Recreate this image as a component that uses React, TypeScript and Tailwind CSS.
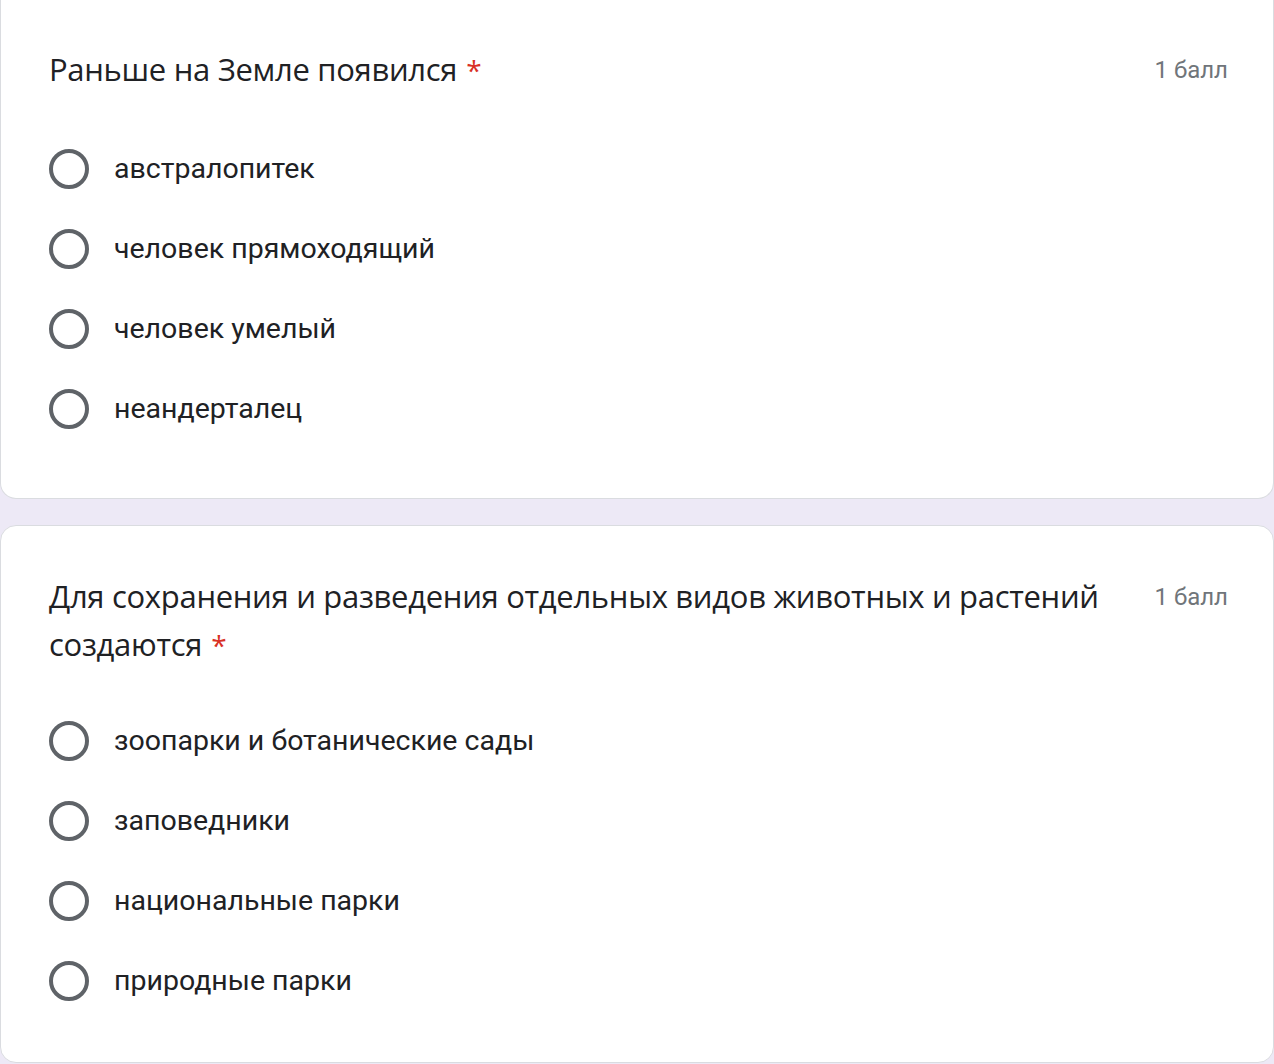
import React from 'react';

interface Question {
    title: string;
    points: string;
    options: string[];
}

const questions: Question[] = [
    {
        title: 'Раньше на Земле появился',
        points: '1 балл',
        options: ['австралопитек', 'человек прямоходящий', 'человек умелый', 'неандерталец'],
    },
    {
        title: 'Для сохранения и разведения отдельных видов животных и растений создаются',
        points: '1 балл',
        options: ['зоопарки и ботанические сады', 'заповедники', 'национальные парки', 'природные парки'],
    },
];

function Radio() {
    return <span className="w-[40px] h-[40px] shrink-0 rounded-full border-[4px] border-[#5f6368]" />;
}

function QuestionBody({ q, gap }: { q: Question; gap: string }) {
    return (
        <>
            <div className="flex items-start justify-between gap-[28px]">
                <div className="text-[31px] leading-[48px] text-[#202124] font-['Open_Sans',sans-serif] tracking-[-0.3px]">
                    {q.title}
                    <span className="text-[#d93025] ml-[9px] text-[28px] leading-none">*</span>
                </div>
                <div className="text-[24px] leading-[48px] text-[#70757a] shrink-0 pt-[1px]">{q.points}</div>
            </div>
            <div className={`flex flex-col ${gap}`}>
                {q.options.map((o) => (
                    <div key={o} className="h-[80px] flex items-center gap-[25px]">
                        <Radio />
                        <span className="text-[28.5px] text-[#202124]">{o}</span>
                    </div>
                ))}
            </div>
        </>
    );
}

export default function App() {
    return (
        <div className="min-h-screen w-[1274px] bg-[#ede9f6] flex flex-col gap-[26px] font-['Roboto',sans-serif]">
            {/* First card, its top is off screen */}
            <div className="h-[499px] bg-white border-x border-b border-[#dadce0] rounded-b-[16px] pl-[48px] pr-[45px] pt-[45px]">
                <QuestionBody q={questions[0]} gap="mt-[35px]" />
            </div>

            {/* Second card */}
            <div className="h-[538px] bg-white border border-[#dadce0] rounded-[16px] pl-[48px] pr-[45px] pt-[46px]">
                <QuestionBody q={questions[1]} gap="mt-[33px]" />
            </div>
        </div>
    );
}
